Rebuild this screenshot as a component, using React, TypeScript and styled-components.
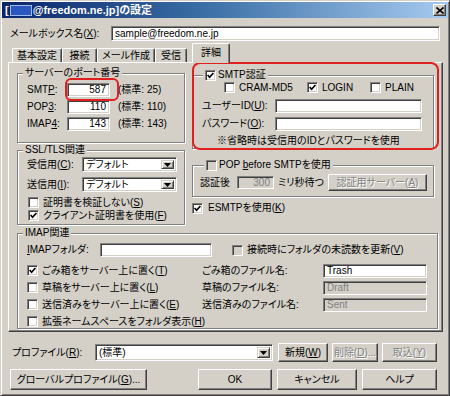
import React from "react";
import styled, { createGlobalStyle } from "styled-components";

const FACE = "#d4d0c8";

const GlobalStyle = createGlobalStyle`
  html, body { margin: 0; padding: 0; background: ${FACE}; }
  * { box-sizing: border-box; text-autospace: no-autospace; }
  u { text-decoration: underline; text-underline-offset: 1px; }
`;

const Window = styled.div`
  position: relative;
  width: 450px;
  height: 396px;
  background: ${FACE};
  border: 1px solid;
  border-color: ${FACE} #404040 #404040 ${FACE};
  box-shadow: inset 1px 1px #fff, inset -1px -1px #808080;
  padding: 1px;
  font-family: "Liberation Sans", "Noto Sans CJK JP", sans-serif;
  font-size: 10px;
  line-height: 12px;
  font-feature-settings: "palt";
  text-autospace: no-autospace;
  color: #000;
  overflow: hidden;
`;

const TitleBar = styled.div`
  height: 16px;
  display: flex;
  align-items: center;
  padding-left: 3px;
  background: linear-gradient(to right, #0a246a, #3a6ea5 45%, #a6caf0);
`;

const TitleText = styled.div`
  display: flex;
  align-items: center;
  color: #fff;
  font-weight: bold;
  font-size: 11px;
  line-height: 13px;
`;

const Redacted = styled.span`
  display: inline-block;
  width: 22px;
  height: 11px;
  margin: 0 1px;
  background: #2a58c0;
  border: 1px solid #9db9ee;
`;

const CloseBtn = styled.div`
  margin-left: auto;
  margin-right: 2px;
  width: 13px;
  height: 12px;
  background: ${FACE};
  border: 1px solid;
  border-color: #fff #404040 #404040 #fff;
  box-shadow: inset -1px -1px #808080;
  display: flex;
  align-items: center;
  justify-content: center;
`;

const Body = styled.div`
  padding: 0 4px 0 6px;
`;

const Row = styled.div<{ $h: number; $mt?: number; $pl?: number; $pr?: number }>`
  display: flex;
  align-items: center;
  height: ${(p) => p.$h}px;
  margin-top: ${(p) => p.$mt ?? 0}px;
  padding-left: ${(p) => p.$pl ?? 0}px;
  padding-right: ${(p) => p.$pr ?? 0}px;
  white-space: nowrap;
`;

const Label = styled.span<{ $w?: number; $ml?: number; $pl?: number }>`
  display: inline-block;
  flex: none;
  width: ${(p) => (p.$w ? `${p.$w}px` : "auto")};
  margin-left: ${(p) => p.$ml ?? 0}px;
  padding-left: ${(p) => p.$pl ?? 0}px;
  white-space: nowrap;
`;

const Field = styled.div<{ $w: number; $h?: number; $disabled?: boolean; $right?: boolean }>`
  flex: none;
  width: ${(p) => p.$w}px;
  height: ${(p) => p.$h ?? 14}px;
  background: ${(p) => (p.$disabled ? FACE : "#fff")};
  color: ${(p) => (p.$disabled ? "#808080" : "#000")};
  border: 1px solid;
  border-color: #808080 #fff #fff #808080;
  box-shadow: inset 1px 1px #404040, inset -1px -1px ${FACE};
  display: flex;
  align-items: center;
  justify-content: ${(p) => (p.$right ? "flex-end" : "flex-start")};
  padding: 0 3px 0 3px;
  overflow: hidden;
  white-space: nowrap;
`;

const Combo = styled.div<{ $w: number; $h: number }>`
  flex: none;
  width: ${(p) => p.$w}px;
  height: ${(p) => p.$h}px;
  background: #fff;
  border: 1px solid;
  border-color: #808080 #fff #fff #808080;
  box-shadow: inset 1px 1px #404040, inset -1px -1px ${FACE};
  display: flex;
  align-items: stretch;
  padding: 2px;
`;

const ComboText = styled.div`
  flex: 1;
  display: flex;
  align-items: center;
  padding-left: 1px;
`;

const DropBtn = styled.div`
  width: 13px;
  flex: none;
  background: ${FACE};
  border: 1px solid;
  border-color: ${FACE} #404040 #404040 ${FACE};
  box-shadow: inset 1px 1px #fff, inset -1px -1px #808080;
  display: flex;
  align-items: center;
  justify-content: center;
`;

const Btn = styled.div<{ $w: number; $h: number; $ml?: number; $auto?: boolean; $disabled?: boolean }>`
  flex: none;
  width: ${(p) => p.$w}px;
  height: ${(p) => p.$h}px;
  margin-left: ${(p) => (p.$auto ? "auto" : `${p.$ml ?? 0}px`)};
  background: ${FACE};
  color: ${(p) => (p.$disabled ? "#808080" : "#000")};
  text-shadow: ${(p) => (p.$disabled ? "1px 1px 0 #fff" : "none")};
  border: 1px solid;
  border-color: #fff #404040 #404040 #fff;
  box-shadow: inset -1px -1px #808080;
  display: flex;
  align-items: center;
  justify-content: center;
  white-space: nowrap;
`;

const TabStrip = styled.div`
  display: flex;
  align-items: flex-end;
  height: 19px;
  margin-top: 2px;
  padding-left: 4px;
`;

const Tab = styled.div<{ $w: number; $active?: boolean; $ml?: number }>`
  position: relative;
  z-index: ${(p) => (p.$active ? 2 : 1)};
  flex: none;
  width: ${(p) => p.$w}px;
  height: ${(p) => (p.$active ? 20 : 14)}px;
  margin-left: ${(p) => p.$ml ?? 0}px;
  margin-bottom: ${(p) => (p.$active ? -1 : 0)}px;
  background: ${FACE};
  border-top: 1px solid #fff;
  border-left: 1px solid #fff;
  border-right: 1px solid #404040;
  box-shadow: inset -1px 0 #808080;
  border-radius: 2px 2px 0 0;
  display: flex;
  justify-content: center;
  align-items: ${(p) => (p.$active ? "flex-start" : "center")};
  padding-top: ${(p) => (p.$active ? 3 : 0)}px;
`;

const Panel = styled.div`
  width: 435px;
  height: 270px;
  background: ${FACE};
  border: 1px solid;
  border-color: #fff #404040 #404040 #fff;
  box-shadow: inset -1px -1px #808080;
  padding: 10px 0 0 8px;
`;

const TopGrid = styled.div`
  display: grid;
  grid-template-columns: 168px 242px;
  column-gap: 7px;
  align-items: start;
`;

const Col = styled.div`
  display: flex;
  flex-direction: column;
`;

const Group = styled.div<{ $h: number; $mt?: number; $w?: number; $pt?: number; $pl?: number }>`
  position: relative;
  width: ${(p) => (p.$w ? `${p.$w}px` : "auto")};
  height: ${(p) => p.$h}px;
  margin-top: ${(p) => p.$mt ?? 0}px;
  padding-top: ${(p) => p.$pt ?? 0}px;
  padding-left: ${(p) => p.$pl ?? 0}px;
  border: 1px solid #808080;
  box-shadow: inset 1px 1px #fff, 1px 1px #fff;
`;

const Legend = styled.div<{ $l: number }>`
  position: absolute;
  top: -7px;
  left: ${(p) => p.$l}px;
  padding: 0 2px;
  background: ${FACE};
  line-height: 12px;
  display: flex;
  align-items: center;
  gap: 2px;
  white-space: nowrap;
`;

const Stack = styled.div<{ $gap: number }>`
  display: flex;
  flex-direction: column;
  gap: ${(p) => p.$gap}px;
`;

const BoxEl = styled.span<{ $gray?: boolean }>`
  flex: none;
  width: 11px;
  height: 11px;
  display: inline-flex;
  align-items: center;
  justify-content: center;
  background: ${(p) => (p.$gray ? FACE : "#fff")};
  border: 1px solid;
  border-color: #808080 #fff #fff #808080;
  box-shadow: inset 1px 1px #404040, inset -1px -1px ${FACE};
`;

const CheckItem = styled.span<{ $w?: number; $gap?: number; $ml?: number }>`
  display: inline-flex;
  align-items: center;
  gap: ${(p) => p.$gap ?? 4}px;
  flex: none;
  width: ${(p) => (p.$w ? `${p.$w}px` : "auto")};
  margin-left: ${(p) => p.$ml ?? 0}px;
  white-space: nowrap;
`;

const ImapGrid = styled.div`
  display: grid;
  grid-template-columns: 175px 121px 104px;
  grid-auto-rows: 17px;
  align-items: center;
  margin-top: 5px;
`;

const Mark = styled.div<{ $l: number; $t: number; $w: number; $h: number; $r: number }>`
  position: absolute;
  left: ${(p) => p.$l}px;
  top: ${(p) => p.$t}px;
  width: ${(p) => p.$w}px;
  height: ${(p) => p.$h}px;
  border: 2px solid #e0201e;
  border-radius: ${(p) => p.$r}px;
  pointer-events: none;
`;

const Tick = () => (
  <svg width="7" height="7" viewBox="0 0 7 7">
    <polyline points="0.6,3 2.6,5.2 6.4,1" fill="none" stroke="#000" strokeWidth="1.7" />
  </svg>
);

const CheckBox = ({ checked, gray }: { checked?: boolean; gray?: boolean }) => (
  <BoxEl $gray={gray}>{checked ? <Tick /> : null}</BoxEl>
);

type CheckProps = {
  checked?: boolean;
  gray?: boolean;
  w?: number;
  gap?: number;
  ml?: number;
  children: React.ReactNode;
};

const Check = ({ checked, gray, w, gap, ml, children }: CheckProps) => (
  <CheckItem $w={w} $gap={gap} $ml={ml}>
    <CheckBox checked={checked} gray={gray} />
    <span>{children}</span>
  </CheckItem>
);

const Arrow = () => (
  <svg width="7" height="4" viewBox="0 0 7 4">
    <polygon points="0,0 7,0 3.5,4" fill="#000" />
  </svg>
);

const CloseX = () => (
  <svg width="8" height="7" viewBox="0 0 8 7">
    <path d="M0.5 0.5 L7.5 6.5 M7.5 0.5 L0.5 6.5" stroke="#000" strokeWidth="1.6" />
  </svg>
);

export default function App() {
  return (
    <>
      <GlobalStyle />
      <Window>
        <TitleBar>
          <TitleText>
            <span>[</span>
            <Redacted />
            <span>@freedom.ne.jp]の設定</span>
          </TitleText>
          <CloseBtn>
            <CloseX />
          </CloseBtn>
        </TitleBar>
        <Body>
          <Row $h={15} $mt={8}>
            <Label $w={103} $pl={2}>
              メールボックス名(<u>X</u>):
            </Label>
            <Field $w={329} $h={15}>
              sample@freedom.ne.jp
            </Field>
          </Row>

          <TabStrip>
            <Tab $w={50}>基本設定</Tab>
            <Tab $w={35}>接続</Tab>
            <Tab $w={58}>メール作成</Tab>
            <Tab $w={32}>受信</Tab>
            <Tab $w={38} $ml={5} $active>
              詳細
            </Tab>
          </TabStrip>

          <Panel>
            <TopGrid>
              <Col>
                <Group $h={70} $pt={9} $pl={9}>
                  <Legend $l={5}>サーバーのポート番号</Legend>
                  <Stack $gap={3}>
                    <Row $h={14}>
                      <Label $w={40}>
                        SMT<u>P</u>:
                      </Label>
                      <Field $w={43} $right>
                        587
                      </Field>
                      <Label $ml={8}>(標準: 25)</Label>
                    </Row>
                    <Row $h={14}>
                      <Label $w={40}>
                        POP<u>3</u>:
                      </Label>
                      <Field $w={43} $right>
                        110
                      </Field>
                      <Label $ml={8}>(標準: 110)</Label>
                    </Row>
                    <Row $h={14}>
                      <Label $w={40}>
                        IMAP<u>4</u>:
                      </Label>
                      <Field $w={43} $right>
                        143
                      </Field>
                      <Label $ml={8}>(標準: 143)</Label>
                    </Row>
                  </Stack>
                </Group>

                <Group $h={75} $mt={7} $pt={6} $pl={9}>
                  <Legend $l={5}>SSL/TLS関連</Legend>
                  <Stack $gap={5}>
                    <Row $h={15}>
                      <Label $w={55}>
                        受信用(<u>C</u>):
                      </Label>
                      <Combo $w={95} $h={15}>
                        <ComboText>デフォルト</ComboText>
                        <DropBtn>
                          <Arrow />
                        </DropBtn>
                      </Combo>
                    </Row>
                    <Row $h={15}>
                      <Label $w={55}>
                        送信用(<u>I</u>):
                      </Label>
                      <Combo $w={95} $h={15}>
                        <ComboText>デフォルト</ComboText>
                        <DropBtn>
                          <Arrow />
                        </DropBtn>
                      </Combo>
                    </Row>
                  </Stack>
                  <Row $h={13} $mt={4} $pl={1}>
                    <Check>
                      証明書を検証しない(<u>S</u>)
                    </Check>
                  </Row>
                  <Row $h={13} $pl={1}>
                    <Check checked>
                      クライアント証明書を使用(<u>F</u>)
                    </Check>
                  </Row>
                </Group>
              </Col>

              <Col>
                <Group $h={74} $mt={2} $pt={5}>
                  <Legend $l={10}>
                    <CheckBox checked />
                    <span>SMTP認証</span>
                  </Legend>
                  <Row $h={13} $pl={31}>
                    <Check w={83}>CRAM-MD5</Check>
                    <Check w={63} checked>
                      LOGIN
                    </Check>
                    <Check>PLAIN</Check>
                  </Row>
                  <Row $h={14} $mt={5} $pl={9}>
                    <Label $w={73}>
                      ユーザーID(<u>U</u>):
                    </Label>
                    <Field $w={147} />
                  </Row>
                  <Row $h={14} $mt={4} $pl={9}>
                    <Label $w={73}>
                      パスワード(<u>O</u>):
                    </Label>
                    <Field $w={147} />
                  </Row>
                  <Row $h={12} $mt={4} $pl={24}>
                    ※省略時は受信用のIDとパスワードを使用
                  </Row>
                </Group>

                <Group $h={32} $mt={16} $pt={8} $pl={7}>
                  <Legend $l={11}>
                    <CheckBox gray />
                    <span>
                      POP <u>b</u>efore SMTPを使用
                    </span>
                  </Legend>
                  <Row $h={17} $pr={6}>
                    <Label $w={37}>認証後</Label>
                    <Field $w={37} $h={13} $disabled $right>
                      300
                    </Field>
                    <Label $ml={4}>ミリ秒待つ</Label>
                    <Btn $w={99} $h={17} $auto $disabled>
                      <span>
                        認証用サーバー(<u>A</u>)
                      </span>
                    </Btn>
                  </Row>
                </Group>

                <Row $h={12} $mt={5}>
                  <Check checked gap={5}>
                    ESMTPを使用(<u>K</u>)
                  </Check>
                </Row>
              </Col>
            </TopGrid>

            <Group $w={421} $h={96} $mt={8} $pt={9} $pl={9}>
              <Legend $l={5}>IMAP関連</Legend>
              <Row $h={14}>
                <Label $w={73}>
                  <u>I</u>MAPフォルダ:
                </Label>
                <Field $w={112} />
                <Check gray ml={20}>
                  接続時にフォルダの未読数を更新(<u>V</u>)
                </Check>
              </Row>
              <ImapGrid>
                <Check checked>
                  ごみ箱をサーバー上に置く(<u>T</u>)
                </Check>
                <Label>ごみ箱のファイル名:</Label>
                <Field $w={104} $h={14}>
                  Trash
                </Field>
                <Check>
                  草稿をサーバー上に置く(<u>L</u>)
                </Check>
                <Label>草稿のファイル名:</Label>
                <Field $w={104} $h={14} $disabled>
                  Draft
                </Field>
                <Check>
                  送信済みをサーバー上に置く(<u>E</u>)
                </Check>
                <Label>送信済みのファイル名:</Label>
                <Field $w={104} $h={14} $disabled>
                  Sent
                </Field>
                <Check>
                  拡張ネームスペースをフォルダ表示(<u>H</u>)
                </Check>
              </ImapGrid>
            </Group>
          </Panel>

          <Row $h={19} $mt={11}>
            <Label $w={87} $pl={4}>
              プロファイル(<u>R</u>):
            </Label>
            <Combo $w={178} $h={17}>
              <ComboText>(標準)</ComboText>
              <DropBtn>
                <Arrow />
              </DropBtn>
            </Combo>
            <Btn $w={50} $h={19} $ml={5}>
              <span>
                新規(<u>W</u>)
              </span>
            </Btn>
            <Btn $w={46} $h={19} $ml={4} $disabled>
              <span>
                削除(<u>D</u>)...
              </span>
            </Btn>
            <Btn $w={55} $h={19} $ml={4} $disabled>
              <span>
                取込(<u>Y</u>)
              </span>
            </Btn>
          </Row>

          <Row $h={21} $mt={7}>
            <Btn $w={137} $h={21} $ml={2}>
              <span>
                グローバルプロファイル(<u>G</u>)...
              </span>
            </Btn>
            <Btn $w={74} $h={21} $ml={51}>
              OK
            </Btn>
            <Btn $w={80} $h={21} $ml={5}>
              キャンセル
            </Btn>
            <Btn $w={75} $h={21} $ml={5}>
              ヘルプ
            </Btn>
          </Row>
        </Body>

        <Mark $l={64} $t={77} $w={54} $h={23} $r={6} />
        <Mark $l={191} $t={61} $w={247} $h={88} $r={8} />
      </Window>
    </>
  );
}
